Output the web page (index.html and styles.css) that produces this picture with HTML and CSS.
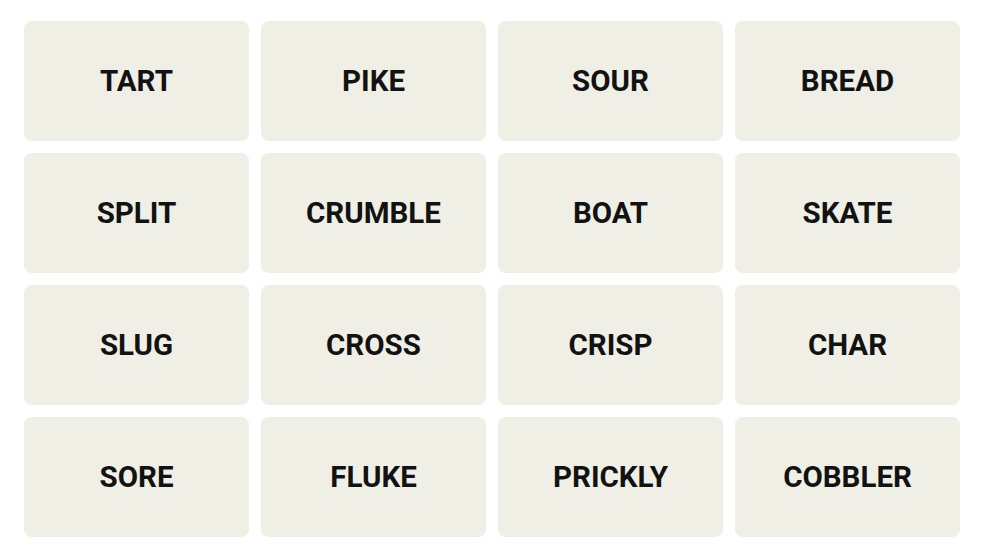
FILE: index.html
```html
<!DOCTYPE html>
<html>
<head>
<meta charset="utf-8">
<link rel="stylesheet" href="styles.css">
</head>
<body>
<div class="board">
  <div class="tile">TART</div>
  <div class="tile">PIKE</div>
  <div class="tile">SOUR</div>
  <div class="tile">BREAD</div>
  <div class="tile">SPLIT</div>
  <div class="tile">CRUMBLE</div>
  <div class="tile">BOAT</div>
  <div class="tile">SKATE</div>
  <div class="tile">SLUG</div>
  <div class="tile">CROSS</div>
  <div class="tile">CRISP</div>
  <div class="tile">CHAR</div>
  <div class="tile">SORE</div>
  <div class="tile">FLUKE</div>
  <div class="tile">PRICKLY</div>
  <div class="tile">COBBLER</div>
</div>
</body>
</html>
```
FILE: styles.css
```css
html, body {
  margin: 0;
  padding: 0;
  background: #ffffff;
}
body {
  padding: 21px 0 0 24px;
  font-family: Roboto, "Liberation Sans", sans-serif;
}
.board {
  display: grid;
  grid-template-columns: repeat(4, 225px);
  grid-auto-rows: 120px;
  gap: 12px;
}
.tile {
  background: #efefe6;
  border-radius: 8px;
  display: flex;
  align-items: center;
  justify-content: center;
  font-weight: 700;
  font-size: 29.5px;
  line-height: 1;
  padding-top: 2px;
  box-sizing: border-box;
  color: #121212;
  text-transform: uppercase;
}
```
